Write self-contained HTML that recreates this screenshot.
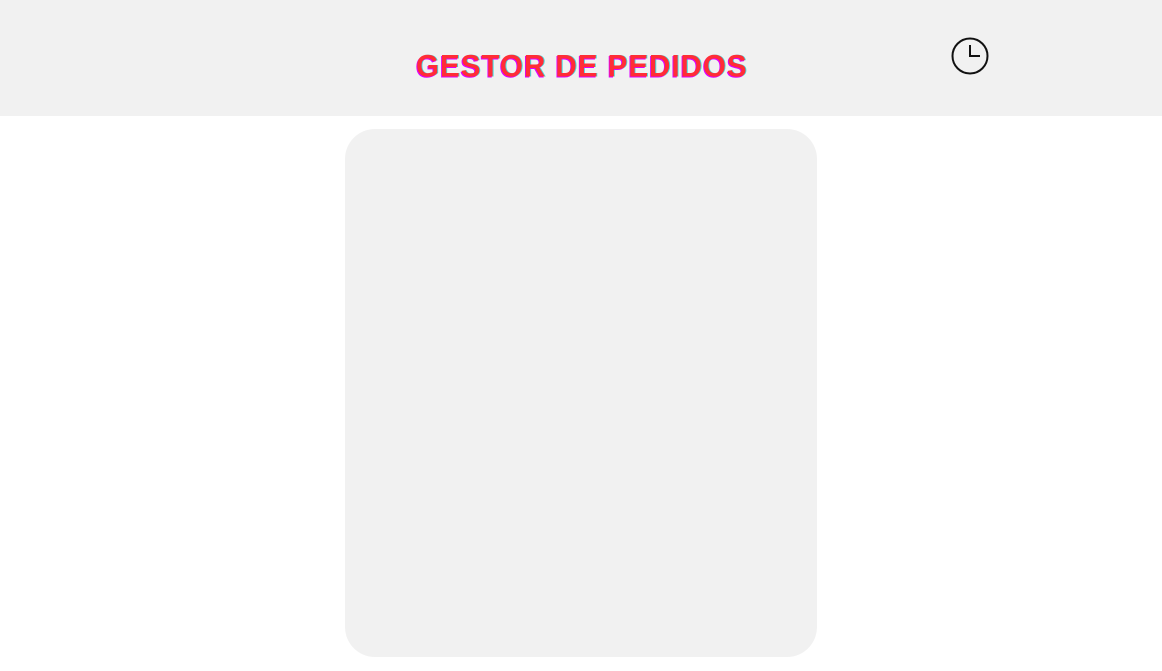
<!DOCTYPE html>
<html><head><style>
body{margin:0;width:1162px;height:671px;background:#fff;overflow:hidden;font-family:"Liberation Sans",sans-serif}
.hdr{position:absolute;left:0;top:0;width:1162px;height:116px;background:#f1f1f1}
.t{position:absolute;left:416px;top:49px;font-weight:bold;font-size:33px;line-height:36px;color:#ff2d36;letter-spacing:1px;white-space:nowrap;text-shadow:-1px 1px 0 #e000ff,1px 0 0 #40e0e0;transform-origin:0 0;transform:scale(0.9,0.95)}
.card{position:absolute;left:345px;top:129px;width:472px;height:528px;background:#f1f1f1;border-radius:30px}
</style></head><body>
<div class="hdr"></div>
<div class="t">GESTOR DE PEDIDOS</div>
<svg style="position:absolute;left:950px;top:36px" width="40" height="40" viewBox="0 0 40 40"><circle cx="20" cy="20" r="17.5" fill="none" stroke="#111" stroke-width="2"/><path d="M20 9V20H30" fill="none" stroke="#111" stroke-width="2"/></svg>
<div class="card"></div>
</body></html>
